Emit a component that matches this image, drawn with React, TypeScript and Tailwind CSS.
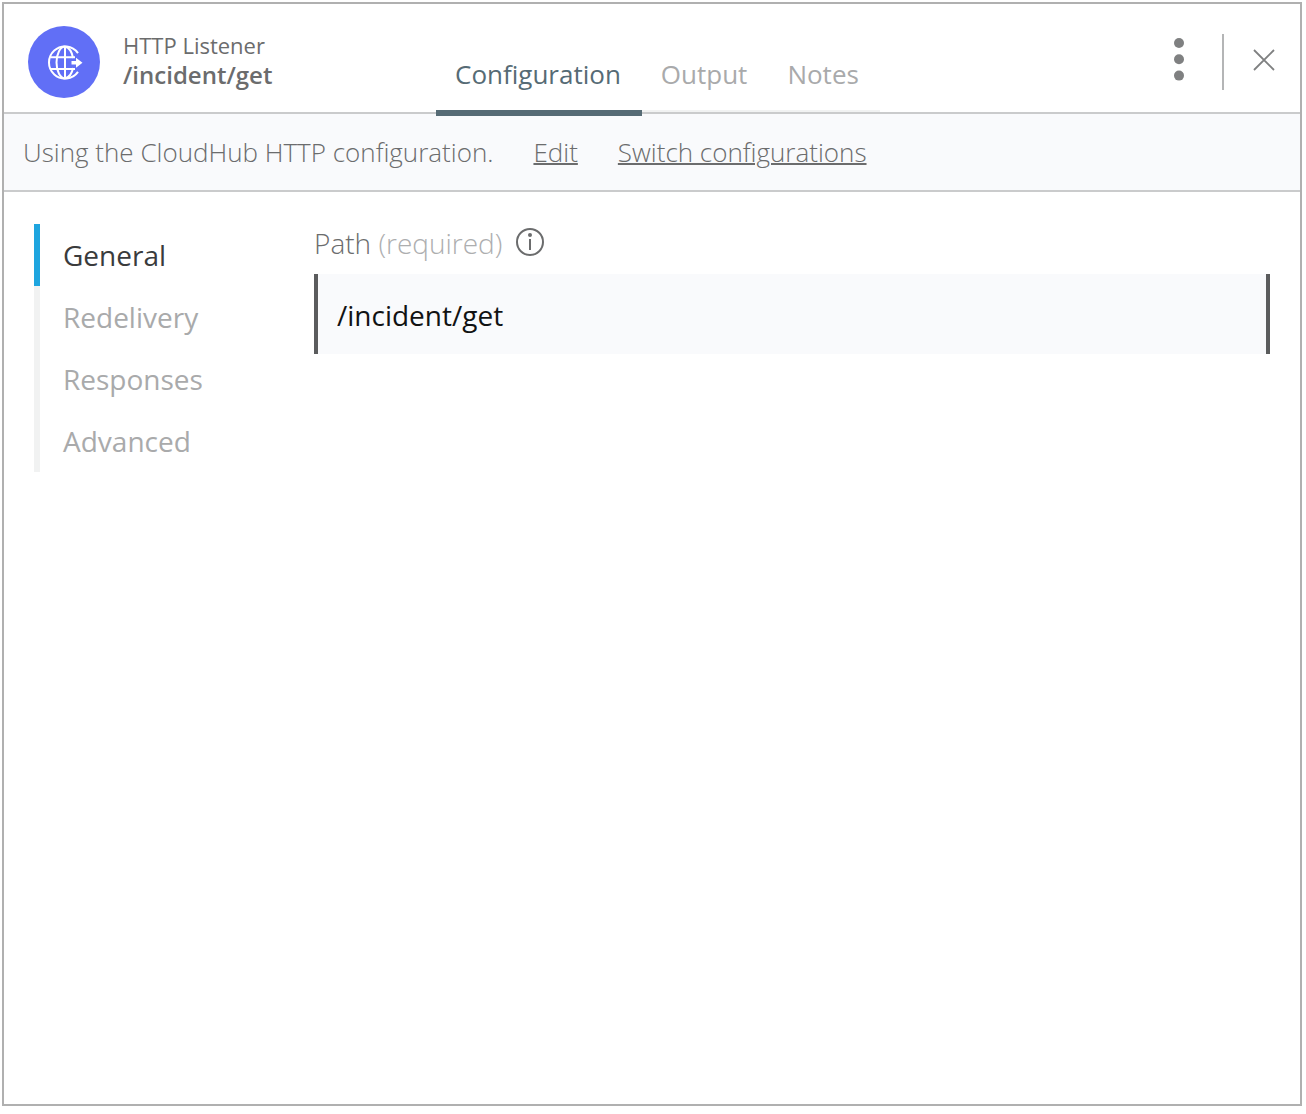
import { useState } from "react";

const tabs = ["Configuration", "Output", "Notes"];
const sections = ["General", "Redelivery", "Responses", "Advanced"];

function ListenerIcon() {
  return (
    <svg
      viewBox="0 0 72 72"
      className="size-18 shrink-0"
      fill="none"
      stroke="#fff"
      strokeWidth="2"
      aria-hidden="true"
    >
      <circle cx="36" cy="36" r="36" fill="#616ff6" stroke="none" />
      <path d="M50 27.200A16 16 0 1 0 50 45.800" />
      <path d="M37 20.500v32M22.500 31.200H47M22.500 43H47" />
      <path d="M37 20.500A8.500 16 0 0 0 37 52.500M37 20.500Q43.500 22.500 45 32M37 52.500Q43.500 50.500 45 42" />
      <path d="M43.500 35h4.500v-3.200l6.500 5-6.500 5v-3.200h-4.500z" fill="#fff" stroke="none" />
    </svg>
  );
}

export default function App() {
  const [tab, setTab] = useState("Configuration");
  const [section, setSection] = useState("General");
  const [path, setPath] = useState("/incident/get");

  return (
    <div className="min-h-screen flex flex-col bg-white pt-0.5 pl-0.5 pr-1 pb-2 font-['Open_Sans',sans-serif] text-[#6b6c6d]">
      <main className="flex grow flex-col border-2 border-[#b0b0b0]">
        <header className="flex h-[110px] items-stretch border-b-2 border-[#cacbcc]">
          <div className="flex w-[432px] shrink-0 items-center gap-[23px] pt-2 pl-6">
            <ListenerIcon />
            <div className="pb-1">
              <p className="text-[22px] leading-[30px]">HTTP Listener</p>
              <h1 className="text-2xl leading-[30px] font-semibold">/incident/get</h1>
            </div>
          </div>
          <nav className="flex self-end" aria-label="Panel tabs">
            {tabs.map((name) => (
              <button
                key={name}
                type="button"
                onClick={() => setTab(name)}
                className={
                  name === tab
                    ? "relative z-10 -mb-1 h-[62px] border-b-6 border-[#566b75] pr-[21px] pb-4 pl-[19px] text-[26px] leading-10 text-[#566b75]"
                    : "h-[58px] border-b-2 border-[#f1f2f2] pr-[21px] pb-4 pl-[19px] text-[26px] leading-10 text-[#a9aaab]"
                }
              >
                {name}
              </button>
            ))}
          </nav>
          <div className="ml-auto flex items-center pt-2 pr-6">
            <button type="button" aria-label="More options" className="px-6 pb-1.5">
              <svg viewBox="0 0 12 44" className="h-11 w-3" fill="#7f8081" aria-hidden="true">
                <circle cx="6" cy="6" r="5" />
                <circle cx="6" cy="22.300" r="5" />
                <circle cx="6" cy="38.600" r="5" />
              </svg>
            </button>
            <div className="mr-3 ml-[13px] h-14 w-0.5 bg-[#b4b5b6]" />
            <button type="button" aria-label="Close" className="ml-4 pb-1">
              <svg viewBox="0 0 24 24" className="size-6" stroke="#7f8081" strokeWidth="1.8" aria-hidden="true">
                <path d="M2 2l20 20M22 2L2 22" />
              </svg>
            </button>
          </div>
        </header>

        <div className="flex h-[78px] items-center gap-10 border-b-2 border-[#cacbcc] bg-[#f9fafc] px-[19px] text-[26px] font-light">
          <p>Using the CloudHub HTTP configuration.</p>
          <a href="#edit" className="underline decoration-2">Edit</a>
          <a href="#switch" className="underline decoration-2">Switch configurations</a>
        </div>

        <div className="flex grow items-start gap-10 px-[30px] py-8">
          <nav className="flex w-60 shrink-0 flex-col" aria-label="Sections">
            {sections.map((name) => (
              <button
                key={name}
                type="button"
                onClick={() => setSection(name)}
                className={
                  name === section
                    ? "h-[62px] border-l-6 border-[#1ea5df] pl-[23px] text-left text-[28px] text-[#3a3b3c]"
                    : "h-[62px] border-l-6 border-[#f1f2f2] pl-[23px] text-left text-[28px] text-[#a9aaab]"
                }
              >
                {name}
              </button>
            ))}
          </nav>
          <div className="grow">
            <div className="flex h-[50px] items-start gap-3.5">
              <label htmlFor="path" className="text-[28px] leading-[38px] font-light">
                Path <span className="text-[#adaeaf]">(required)</span>
              </label>
              <button type="button" aria-label="About this field" className="pt-1">
                <svg viewBox="0 0 28 28" className="size-7" fill="none" stroke="#6b6c6d" strokeWidth="2" aria-hidden="true">
                  <circle cx="14" cy="14" r="13" />
                  <path d="M14 11v11" />
                  <circle cx="14" cy="7" r="2" fill="#6b6c6d" stroke="none" />
                </svg>
              </button>
            </div>
            <input
              id="path"
              type="text"
              value={path}
              onChange={(e) => setPath(e.target.value)}
              className="h-20 w-full border-x-4 border-[#5b5c5d] bg-[#f9fafc] px-[19px] pt-0.5 text-[28px] text-[#111213] outline-none"
            />
          </div>
        </div>
      </main>
    </div>
  );
}
